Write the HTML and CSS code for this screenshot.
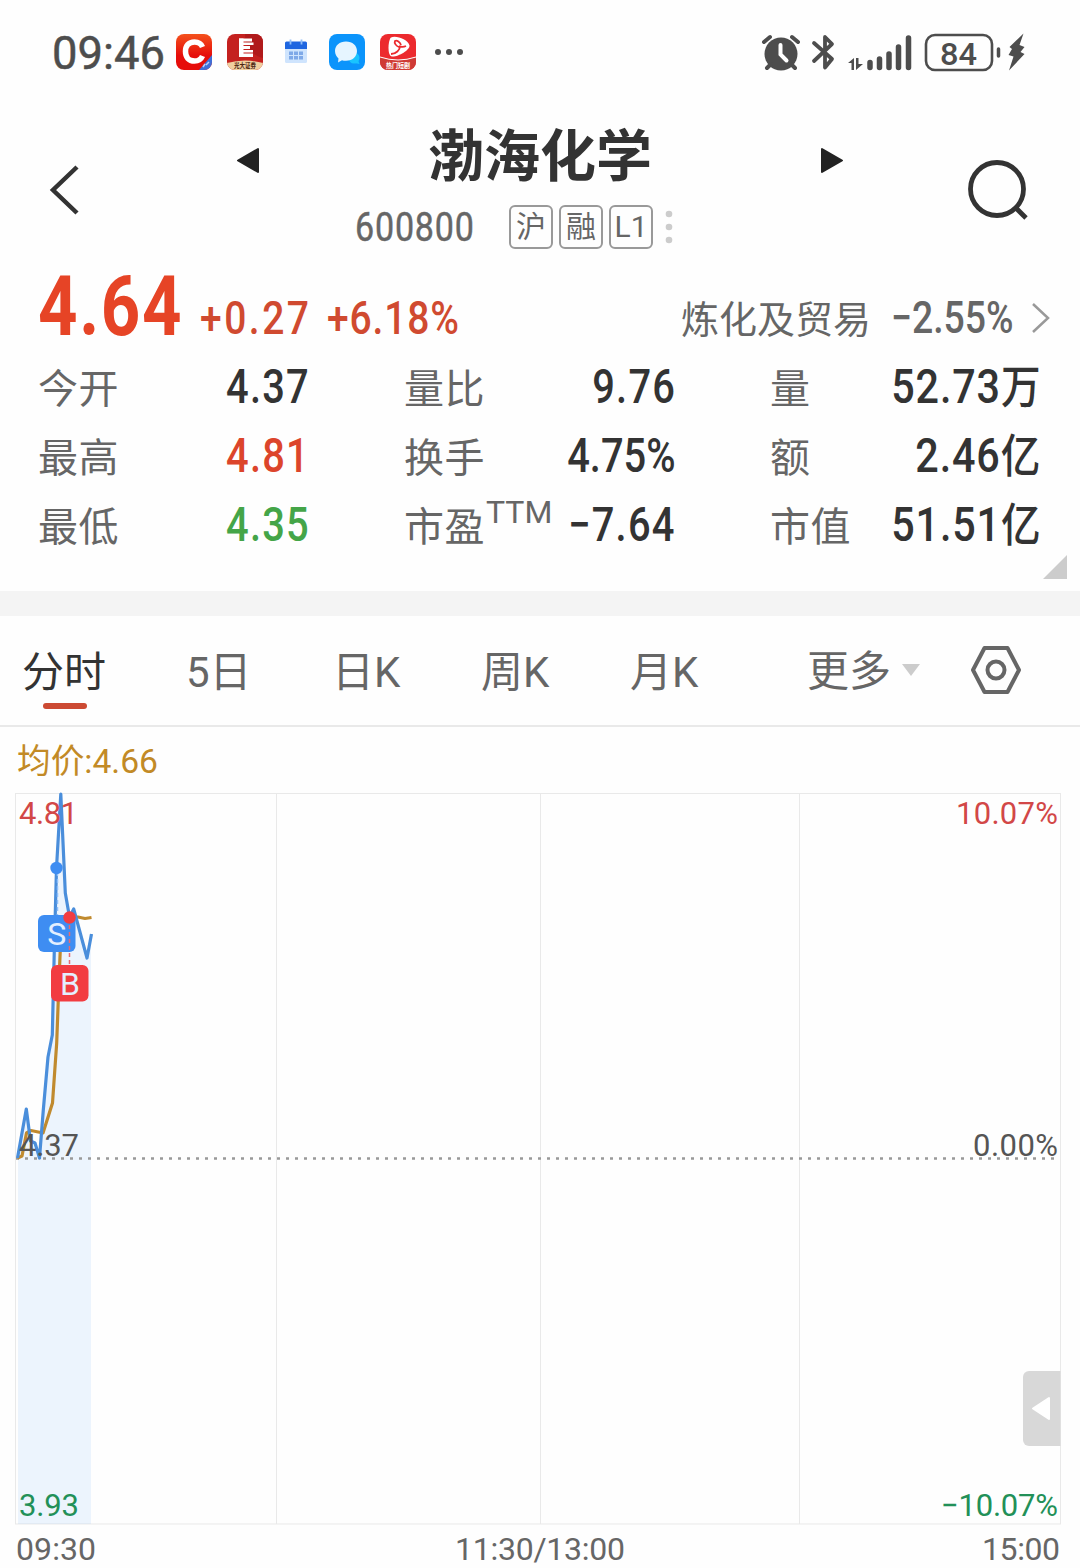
FILE: index.html
```html
<!DOCTYPE html>
<html lang="zh-CN">
<head>
  <meta charset="utf-8">
  <title>渤海化学 600800</title>
  <link rel="stylesheet" href="styles.css">
</head>
<body>
  <div class="statusbar">
    <span class="clock">09:46</span>
    <div class="apps">
      <svg width="36" height="36" viewBox="0 0 36 36">
        <defs>
          <linearGradient id="orangeRed" x1="0" y1="0" x2="0" y2="1"><stop offset="0" stop-color="#f4511c"/><stop offset=".6" stop-color="#e60d0a"/></linearGradient>
          <clipPath id="appClip"><rect width="36" height="36" rx="8"/></clipPath>
        </defs>
        <g clip-path="url(#appClip)">
          <rect width="36" height="36" fill="url(#orangeRed)"/>
          <path d="M36 21v15H23z" fill="#3f6fd8"/>
          <path d="M27 33l2-3M30 31l3-3" stroke="#b9cdf8" stroke-width="1.5"/>
        </g>
        <path d="M26.500 13C25 9.500 22 8 18.500 8 12.500 8 9.500 12 9.500 17.500S12.500 27 18.500 27c3.500 0 6.500-1.500 8-5" fill="none" stroke="#fff" stroke-width="5.500"/>
      </svg>
      <svg width="36" height="36" viewBox="0 0 36 36">
        <g clip-path="url(#appClip)">
          <rect width="36" height="36" fill="#c4211f"/>
          <path d="M18 0c0 14 8 22 18 24V0z" fill="#b01a1b"/>
          <path d="M0 29q18-5 36 0v7H0z" fill="#f0cfa0"/>
        </g>
        <path d="M12 4.500h13v3H12zM12 8.500h14.500v2.500H12zM12 12h11v3H12zM12 16h14v2.500H12zM12 19.500h14v3.500H12z" fill="#fff"/>
        <path d="M12 4.500h4.500V23H12z" fill="#fff"/>
        <text x="18" y="34" class="app-name dark" textLength="22" lengthAdjust="spacingAndGlyphs">光大证券</text>
      </svg>
      <svg width="36" height="36" viewBox="0 0 36 36">
        <rect x="7" y="8" width="22" height="21" rx="1.500" fill="#cfe4fd"/>
        <path d="M8.500 7.500h19a1.500 1.500 0 0 1 1.500 1.500v6H7V9a1.500 1.500 0 0 1 1.500-1.500z" fill="#1f66e0"/>
        <path d="M12.500 5.500v5M23.500 5.500v5" stroke="#8fbdf7" stroke-width="1.800"/>
        <path d="M11 17.500h4v3.500h-4zM16 17.500h4v3.500h-4zM21 17.500h4v3.500h-4zM11 22h4v3.500h-4zM16 22h4v3.500h-4zM21 22h4v3.500h-4z" fill="#7fa9e8"/>
      </svg>
      <svg width="36" height="36" viewBox="0 0 36 36">
        <rect width="36" height="36" rx="8" fill="#0b94fb"/>
        <circle cx="25" cy="24" r="5.500" fill="#19c4ff"/>
        <path d="M29 26l1.500 4-5-1z" fill="#19c4ff"/>
        <path d="M17 7.500c6.500 0 11 4 11 9.500s-4.500 9.800-11 9.800c-1.500 0-3 0-4-.6L9 28.500l.5-4C7.500 22.500 6 20 6 17c0-5.500 4.500-9.500 11-9.500z" fill="#e6f5ff"/>
      </svg>
      <svg width="36" height="36" viewBox="0 0 36 36">
        <g clip-path="url(#appClip)">
          <rect width="36" height="36" fill="#ec2a2e"/>
          <path d="M0 23q18 6 36 0v13H0z" fill="#cf3a35"/>
        </g>
        <path d="M0 23q18 6 36 0" fill="none" stroke="#fff" stroke-width="1"/>
        <path d="M11 3.500c5-2.500 17 2 18.500 8C30 16 18 23 12 22.500 7 22 8 6 11 3.500z" fill="#fff"/>
        <path d="M19 13c-3-1-5-4-4-6 2-1 5 1 6 4M19 12c2 1 5 1 7 0M20 12c0 4-4 8-9 8" fill="none" stroke="#ec2a2e" stroke-width="1.800"/>
        <text x="18" y="34" class="app-name" textLength="24" lengthAdjust="spacingAndGlyphs">热门短剧</text>
      </svg>
      <svg class="more-dots" width="30" height="8" viewBox="0 0 30 8"><circle cx="4" cy="4" r="3"/><circle cx="15" cy="4" r="3"/><circle cx="26" cy="4" r="3"/></svg>
    </div>
    <svg class="system" width="268" height="42" viewBox="760 31 268 42">
      <!-- alarm -->
      <circle cx="781" cy="53" r="16.500"/>
      <path d="M764 41l6-5M798 41l-6-5M771 63l-4 4M791 63l4 4" class="stroke" stroke-width="4"/>
      <path d="M780.500 44v9.500l6 6" fill="none" stroke="#fff" stroke-width="4" stroke-linecap="round"/>
      <!-- bluetooth -->
      <path d="M814 42l18 16-7 8.500V36l7 7-18 17" class="stroke" stroke-width="3.800"/>
      <!-- signal -->
      <path d="M848 62l6-5v12h-2.500v-7zM856 57h2.500v6h4.500l-7 6z"/>
      <path d="M870 61.500v5M879.500 58v8.500M889 53v13.500M898.500 46v20.500M908.500 37v29.500" class="stroke" stroke-width="5.500"/>
      <!-- battery -->
      <rect x="926" y="34" width="66" height="35" rx="9" class="stroke" stroke-width="2.600"/>
      <path d="M998.500 48v7" class="stroke" stroke-width="3.500"/>
      <text x="940" y="63.500" class="level" textLength="37" lengthAdjust="spacingAndGlyphs">84</text>
      <path d="M1023.500 32.500L1009.500 46l2.500 2-3.500 6 5 1.500-4.500 14L1024.500 53l-4-2 4-5-5-2z" class="bolt"/>
    </svg>
  </div>

  <header class="header">
    <svg class="back" width="32" height="54" viewBox="0 0 32 54"><path d="M29 4L5 27l24 23"/></svg>
    <div class="title-block">
      <div class="title-row">
        <svg width="24" height="28" viewBox="0 0 24 28"><path d="M2 14.500L22 3v23z"/></svg>
        <h1>渤海化学</h1>
        <svg width="24" height="28" viewBox="0 0 24 28"><path d="M22 14.500L2 3v23z"/></svg>
      </div>
      <div class="code-row">
        <span class="code">600800</span>
        <span class="badge">沪</span>
        <span class="badge">融</span>
        <span class="badge">L1</span>
        <svg class="kebab" width="8" height="36" viewBox="0 0 8 36"><circle cx="4" cy="5" r="3.300"/><circle cx="4" cy="18" r="3.300"/><circle cx="4" cy="31" r="3.300"/></svg>
      </div>
    </div>
    <svg class="search" width="66" height="66" viewBox="0 0 66 66"><circle cx="32" cy="31" r="26.500"/><path d="M50.500 49.500L61 60"/></svg>
  </header>

  <section class="quote">
    <div class="price-row">
      <span class="price">4.64</span>
      <span class="change">+0.27</span>
      <span class="percent">+6.18%</span>
      <div class="sector">
        <span class="sector-name">炼化及贸易</span>
        <span class="sector-change">−2.55%</span>
        <svg width="22" height="32" viewBox="0 0 22 32"><path d="M3 2l15 14L3 30"/></svg>
      </div>
    </div>
    <div class="stats">
      <span class="label">今开</span><span class="value first">4.37</span>
      <span class="label">量比</span><span class="value">9.76</span>
      <span class="label last">量</span><span class="value unit">52.73<i>万</i></span>
      <span class="label">最高</span><span class="value first up">4.81</span>
      <span class="label">换手</span><span class="value pct">4.75%</span>
      <span class="label last">额</span><span class="value unit">2.46<i>亿</i></span>
      <span class="label">最低</span><span class="value first down">4.35</span>
      <span class="label">市盈<sup>TTM</sup></span><span class="value">−7.64</span>
      <span class="label last">市值</span><span class="value unit">51.51<i>亿</i></span>
    </div>
    <svg class="expand" width="24" height="24" viewBox="0 0 24 24"><path d="M24 0v24H0z"/></svg>
  </section>

  <nav class="tabs">
    <span class="tab active">分时</span>
    <span class="tab five">5日</span>
    <span class="tab">日K</span>
    <span class="tab">周K</span>
    <span class="tab">月K</span>
    <span class="tab more">更多<svg width="18" height="12" viewBox="0 0 18 12"><path d="M0 0h18L9 12z"/></svg></span>
    <svg class="settings" width="52" height="50" viewBox="0 0 52 50"><path d="M14.500 3h23L49 25 37.500 47h-23L3 25z"/><circle cx="26" cy="25" r="8.500"/></svg>
  </nav>

  <svg class="chart" width="1080" height="841" viewBox="0 727 1080 841">
    <text x="17" y="773" class="avg" textLength="141" lengthAdjust="spacingAndGlyphs">均价:4.66</text>

    <rect x="15.500" y="793.500" width="1045" height="730.500" class="grid"/>
    <path d="M276.500 794v730M540.500 794v730M799.500 794v730" class="grid"/>

    <path d="M18 1158L26.300 1109 30.500 1141 39.500 1158 43.300 1110 48 1057 52.300 1035 54.400 946 56.500 868 60.800 794 65.300 893 69.500 917 73.700 909 87 958 91 934V1524H18z" class="area"/>
    <path d="M16 1158.500H1060" class="baseline"/>
    <path d="M17.500 1158L22 1156 26.500 1133 31 1130.500 43 1133 52.500 1103 56.700 1043 59 980 60.500 945 65 924 69.500 917 78 917 85 918.500 91.500 917.500" class="line avg-line"/>
    <path d="M17.500 1158L26.300 1109 30.500 1141 35 1143 39.500 1158 43.300 1110 48 1057 52.300 1035 54.400 946 56.500 868 60.800 794 65.300 893 69.500 917 73.700 909 87 958 91.500 934" class="line price-line"/>

    <g class="axis">
      <text x="19" y="824" class="red" textLength="59">4.81</text>
      <text x="1058" y="824" class="red end" textLength="102">10.07%</text>
      <text x="19" y="1156" textLength="60">4.37</text>
      <text x="1058" y="1156" class="end" textLength="85">0.00%</text>
      <text x="19" y="1516" class="green" textLength="60">3.93</text>
      <text x="1058" y="1516" class="green end" textLength="117">−10.07%</text>
      <text x="16" y="1560" class="time" textLength="80">09:30</text>
      <text x="540" y="1560" class="time mid" textLength="170">11:30/13:00</text>
      <text x="1060" y="1560" class="time end" textLength="78">15:00</text>
    </g>

    <path d="M57.500 872v44" class="link sell-link"/>
    <rect x="38" y="915" width="37.500" height="37" rx="6" class="sell"/>
    <circle cx="56.500" cy="868" r="6.200" class="sell"/>
    <text x="56.700" y="945" class="mark">S</text>
    <path d="M69.500 918v48" class="link buy-link"/>
    <rect x="51" y="965" width="37.500" height="36.500" rx="6" class="buy"/>
    <circle cx="69.500" cy="917.500" r="6.200" class="buy"/>
    <text x="70" y="994.500" class="mark">B</text>

    <path d="M1060.500 1371h-31.500a6 6 0 0 0-6 6v63a6 6 0 0 0 6 6h31.500z" class="drawer"/>
    <path d="M1033 1408.500l16-10.500v21z" class="drawer-arrow"/>
  </svg>
</body>
</html>
```

FILE: styles.css
```css
* {
  box-sizing: border-box;
}
body {
  margin: 0;
  width: 1080px;
  height: 1568px;
  overflow: hidden;
  background: #fefefe;
  color: #666;
  font-family: Roboto, "Noto Sans CJK SC", sans-serif;
}
svg {
  display: block;
  flex: none;
}

/* status bar */
.statusbar {
  display: flex;
  align-items: center;
  height: 106px;
  padding: 0 52px;
}
.clock {
  width: 124px;
  font-size: 47px;
  line-height: 106px;
  color: #4d4d4d;
  -webkit-text-stroke: .5px #4d4d4d;
  transform: scaleX(.965);
  transform-origin: left;
}
.apps {
  display: flex;
  align-items: center;
  gap: 15px;
  margin-top: -3px;
}
.app-name {
  font-size: 7px;
  font-weight: 700;
  fill: #fff;
  text-anchor: middle;
}
.app-name.dark {
  fill: #4a2410;
}
.more-dots {
  margin-left: 3px;
  fill: #4d4d4d;
}
.system {
  margin-left: auto;
  fill: #4d4d4d;
}
.system .stroke {
  fill: none;
  stroke: #4d4d4d;
  stroke-linecap: round;
  stroke-linejoin: round;
}
.level {
  font-size: 32px;
  font-weight: 500;
}

/* header */
.header {
  display: flex;
  height: 156px;
  padding: 0 48px;
}
.header path,
.header circle {
  fill: none;
  stroke: #333;
}
.back {
  margin-top: 57px;
  stroke-width: 4.500;
}
.search {
  margin-top: 52px;
  margin-left: auto;
  margin-right: 1px;
  stroke-width: 4.800;
}
.title-block {
  width: 608px;
  margin-left: 156px;
  padding-top: 20px;
}
.title-row {
  display: flex;
  align-items: center;
  justify-content: space-between;
  height: 62px;
}
.title-row svg {
  margin-top: 6px;
}
.title-row path {
  fill: #222;
  stroke: #222;
  stroke-width: 2;
  stroke-linejoin: round;
}
h1 {
  margin: 0;
  font-size: 56px;
  line-height: 62px;
  font-weight: 700;
  color: #333;
}
.code-row {
  display: flex;
  align-items: center;
  gap: 6px;
  margin: 16px 0 0 119px;
}
.code {
  width: 148px;
  font-size: 41px;
  line-height: 46px;
  letter-spacing: 1px;
  -webkit-text-stroke: .5px #666;
  transform: scaleX(.83);
  transform-origin: left;
}
.badge {
  width: 44px;
  height: 44px;
  border: 2px solid #999;
  border-radius: 6px;
  font-size: 30px;
  line-height: 40px;
  text-align: center;
}
.header .kebab {
  margin-left: 6px;
}
.header .kebab circle {
  fill: #ccc;
  stroke: none;
}

/* quote */
.quote {
  position: relative;
  height: 354px;
  padding: 0 40px 0 38px;
  border-bottom: 25px solid #f4f4f4;
}
.price-row {
  display: flex;
  height: 90px;
  line-height: 90px;
  color: #d04a30;
}
.price,
.change,
.percent,
.sector-change {
  font-weight: 500;
  transform: scaleX(.83);
  transform-origin: left;
  white-space: nowrap;
}
.price {
  width: 162px;
  font-size: 83px;
  font-weight: 700;
  letter-spacing: 2px;
  color: #e64426;
}
.change,
.percent {
  padding-top: 11px;
  font-size: 47px;
  letter-spacing: 1px;
}
.change {
  width: 127px;
  letter-spacing: 3px;
}
.sector {
  display: flex;
  margin-left: auto;
  margin-right: -12px;
  padding-top: 10px;
  color: #666;
}
.sector-name {
  width: 210px;
  padding-top: 3px;
  font-size: 38px;
}
.sector-change {
  width: 139px;
  padding-top: 1px;
  font-size: 45px;
}
.sector svg {
  margin-top: 30px;
  fill: none;
  stroke: #999;
  stroke-width: 2.500;
}
.stats {
  display: grid;
  grid-template-columns: 188px 178px 150px 122px 188px 1fr;
  grid-auto-rows: 69px;
  line-height: 69px;
}
.label {
  padding-top: 3px;
  font-size: 40px;
  letter-spacing: .5px;
  white-space: nowrap;
}
.label.last {
  padding-left: 94px;
}
.label sup {
  margin-left: 1px;
  font-size: 32px;
  letter-spacing: 0;
  line-height: 0;
  vertical-align: 18px;
}
.value {
  font-size: 48px;
  font-weight: 500;
  letter-spacing: 1.500px;
  color: #333;
  white-space: nowrap;
  justify-self: end;
  transform: scaleX(.83);
  transform-origin: right;
}
.value.first {
  justify-self: start;
  transform-origin: left;
}
.value.pct {
  letter-spacing: 0;
}
.value.unit {
  letter-spacing: 1px;
  transform: scaleX(.86);
}
.value i {
  font-style: normal;
  font-size: 46px;
  letter-spacing: 0;
}
.value.up {
  color: #dc452b;
}
.value.down {
  color: #44a548;
}
.expand {
  position: absolute;
  right: 13px;
  bottom: 12px;
  fill: #ccc;
}

/* tabs */
.tabs {
  display: flex;
  height: 111px;
  padding-left: 22px;
  border-bottom: 2px solid #e9e9e9;
  font-size: 42px;
  line-height: 110px;
}
.tab {
  flex: none;
  width: 149px;
  padding-top: 2px;
}
.tab.active {
  position: relative;
  width: 164px;
  color: #333;
}
.tab.five {
  width: 146px;
}
.tab.active::after {
  content: "";
  position: absolute;
  left: 21px;
  top: 87px;
  width: 44px;
  height: 6px;
  border-radius: 3px;
  background: #cc4a33;
}
.tab.more {
  display: flex;
  align-items: center;
  gap: 11px;
  width: auto;
  margin-left: 28px;
}
.tab.more svg {
  margin-top: -3px;
  fill: #ccc;
}
.settings {
  margin: 29px 0 0 50px;
  fill: none;
  stroke: #666;
  stroke-width: 4;
  stroke-linejoin: round;
}

/* chart */
.avg {
  font-size: 34px;
  fill: #c28a26;
}
.grid {
  fill: none;
  stroke: #e9e9e9;
  stroke-width: 1;
}
.axis text {
  font-size: 31px;
  fill: #555;
}
.axis .red {
  fill: #d24747;
}
.axis .green {
  fill: #229058;
}
.axis .time {
  font-size: 32px;
  fill: #666;
}
.axis .mid {
  text-anchor: middle;
}
.axis .end {
  text-anchor: end;
}
.area {
  fill: #3c8cf5;
  fill-opacity: .09;
}
.baseline {
  stroke: #999;
  stroke-width: 2.500;
  stroke-dasharray: 3 6;
}
.line {
  fill: none;
  stroke-width: 3.200;
  stroke-linejoin: round;
}
.avg-line {
  stroke: #c08a2e;
}
.price-line {
  stroke: #4a8edb;
}
.link {
  stroke-width: 1.500;
  stroke-dasharray: 4 3;
}
.sell-link {
  stroke: #8fc0fb;
}
.buy-link {
  stroke: #e86a72;
}
.sell {
  fill: #3e8df2;
}
.buy {
  fill: #f23c41;
}
.mark {
  font-size: 32px;
  fill: #e4efff;
  text-anchor: middle;
}
.drawer {
  fill: #d8d8d8;
}
.drawer-arrow {
  fill: #fff;
  stroke: #fff;
  stroke-width: 2;
  stroke-linejoin: round;
}
```
